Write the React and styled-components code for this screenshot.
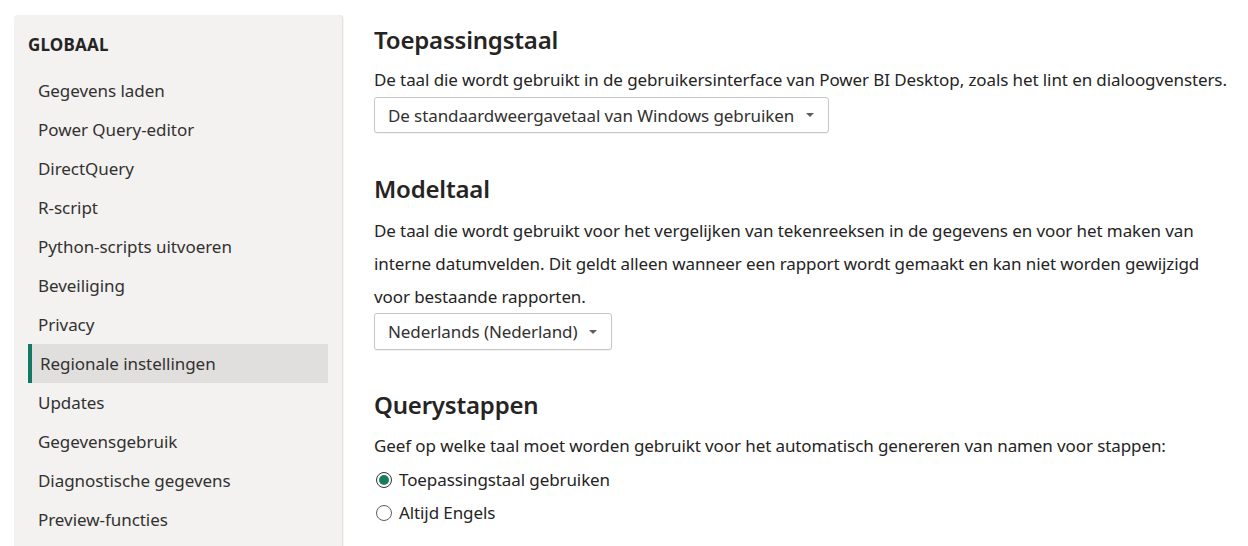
import React from "react";
import styled, { createGlobalStyle } from "styled-components";

const Global = createGlobalStyle`
  html, body { margin: 0; padding: 0; background: #ffffff; }
  body { font-family: "Noto Sans", "Open Sans", sans-serif; color: #252423; }
`;

const Page = styled.div`
  display: flex;
  align-items: flex-start;
  gap: 32px;
  padding: 15px 0 0 14px;
  height: 531px;
  overflow: hidden;
`;

const Sidebar = styled.nav`
  width: 328px;
  min-height: 560px;
  box-sizing: border-box;
  background: #f3f2f1;
  border-radius: 4px 4px 0 0;
  padding: 11px 14px 0 14px;
  box-shadow: 1px 0 0 #e3e1df, 2px 0 1px rgba(0,0,0,0.04);
`;

const GroupTitle = styled.div`
  font-size: 17px;
  font-weight: 700;
  line-height: 38px;
  color: #252423;
  margin-bottom: 7px;
  letter-spacing: 0.2px;
`;

const NavItem = styled.div`
  height: 39px;
  display: flex;
  align-items: center;
  box-sizing: border-box;
  font-size: 17px;
  color: #323130;
  letter-spacing: -0.05px;
  padding-left: ${(p) => (p.$active ? "8px" : "10px")};
  background: ${(p) => (p.$active ? "#e1dfdd" : "transparent")};
  border-left: ${(p) => (p.$active ? "4px solid #117865" : "none")};
`;

const Content = styled.main`
  flex: 1;
  padding-top: 10px;
`;

const Heading = styled.h2`
  margin: ${(p) => p.$mt || 0}px 0 0 0;
  font-size: 24px;
  font-weight: 600;
  line-height: 30px;
  color: #252423;
  letter-spacing: -0.2px;
`;

const Desc = styled.p`
  margin: ${(p) => p.$mt || 0}px 0 0 0;
  font-size: 17px;
  line-height: ${(p) => p.$lh || 28}px;
  color: #252423;
  letter-spacing: -0.1px;
  max-width: 854px;
`;

const Select = styled.div`
  display: inline-flex;
  align-items: center;
  box-sizing: border-box;
  height: ${(p) => p.$h || 36}px;
  margin-top: ${(p) => p.$mt || 0}px;
  padding: 0 14px 0 13px;
  border: 1px solid #c8c6c4;
  border-radius: 3px;
  font-size: 17px;
  color: #323130;
  letter-spacing: -0.1px;
  background: #fff;
  box-shadow: 0 1px 1px rgba(0,0,0,0.06);
`;

const Caret = styled.span`
  width: 0;
  height: 0;
  margin-left: 12px;
  border-left: 4px solid transparent;
  border-right: 4px solid transparent;
  border-top: 4px solid #605e5c;
`;

const Block = styled.div`
  display: flex;
  flex-direction: column;
  align-items: flex-start;
`;

const RadioList = styled.div`
  margin-top: 3px;
  display: flex;
  flex-direction: column;
`;

const RadioRow = styled.label`
  height: 33px;
  display: flex;
  align-items: center;
  gap: 7px;
  font-size: 17px;
  color: #252423;
  letter-spacing: -0.1px;
  padding-left: 2px;
`;

const Radio = styled.span`
  width: 16px;
  height: 16px;
  box-sizing: border-box;
  border-radius: 50%;
  border: 1px solid ${(p) => (p.$checked ? "#323130" : "#605e5c")};
  display: flex;
  align-items: center;
  justify-content: center;
  background: #fff;
  &::after {
    content: "";
    display: ${(p) => (p.$checked ? "block" : "none")};
    width: 10px;
    height: 10px;
    border-radius: 50%;
    background: #1b7a62;
  }
`;

const items = [
  "Gegevens laden",
  "Power Query-editor",
  "DirectQuery",
  "R-script",
  "Python-scripts uitvoeren",
  "Beveiliging",
  "Privacy",
  "Regionale instellingen",
  "Updates",
  "Gegevensgebruik",
  "Diagnostische gegevens",
  "Preview-functies",
];

export default function App() {
  return (
    <>
      <Global />
      <Page>
        <Sidebar>
          <GroupTitle>GLOBAAL</GroupTitle>
          {items.map((it) => (
            <NavItem key={it} $active={it === "Regionale instellingen"}>
              {it}
            </NavItem>
          ))}
        </Sidebar>
        <Content>
          <Block>
            <Heading>Toepassingstaal</Heading>
            <Desc $mt={11}>
              De taal die wordt gebruikt in de gebruikersinterface van Power BI Desktop, zoals het lint en dialoogvensters.
            </Desc>
            <Select $mt={3} $h={36}>
              De standaardweergavetaal van Windows gebruiken
              <Caret />
            </Select>
          </Block>
          <Block>
            <Heading $mt={41}>Modeltaal</Heading>
            <Desc $mt={10} $lh={33}>
              De taal die wordt gebruikt voor het vergelijken van tekenreeksen in de gegevens en voor het maken van interne datumvelden. Dit geldt alleen wanneer een rapport wordt gemaakt en kan niet worden gewijzigd voor bestaande rapporten.
            </Desc>
            <Select $h={37}>
              Nederlands (Nederland)
              <Caret />
            </Select>
          </Block>
          <Block>
            <Heading $mt={40}>Querystappen</Heading>
            <Desc $mt={12}>
              Geef op welke taal moet worden gebruikt voor het automatisch genereren van namen voor stappen:
            </Desc>
            <RadioList>
              <RadioRow>
                <Radio $checked />
                Toepassingstaal gebruiken
              </RadioRow>
              <RadioRow>
                <Radio />
                Altijd Engels
              </RadioRow>
            </RadioList>
          </Block>
        </Content>
      </Page>
    </>
  );
}
